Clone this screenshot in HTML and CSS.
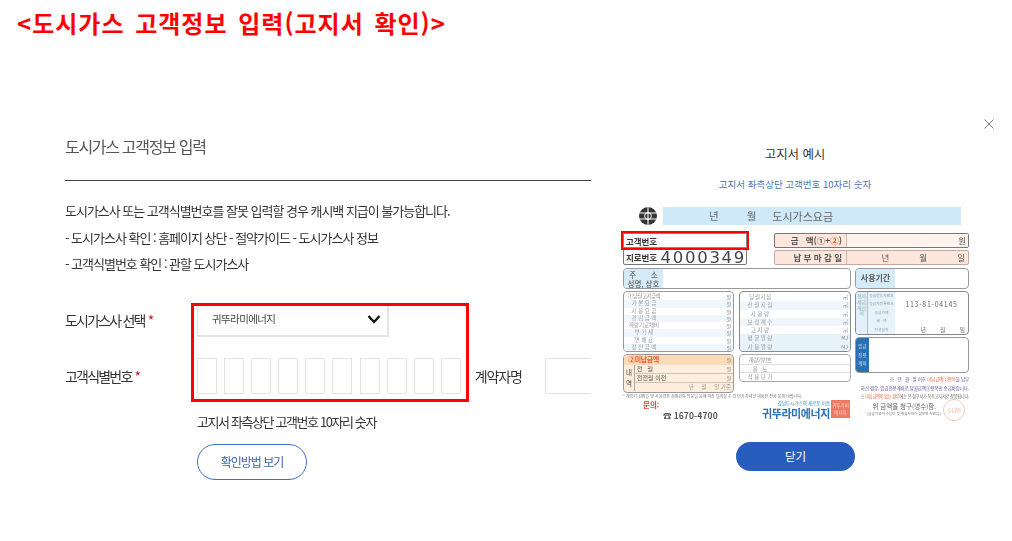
FILE: index.html
```html
<!DOCTYPE html>
<html lang="ko">
<head>
  <meta charset="UTF-8" />
  <title>도시가스 고객정보 입력</title>
  <link rel="stylesheet" href="styles.css">
</head>
<body>
  <h1 class="page-title">&lt;도시가스 고객정보 입력(고지서 확인)&gt;</h1>

  <div class="content">
    <!-- form -->
    <div class="form-panel">
      <h2 class="form-title">도시가스 고객정보 입력</h2>
      <div class="notice">
        <p>도시가스사 또는 고객식별번호를 잘못 입력할 경우 캐시백 지급이 불가능합니다.</p>
        <p>- 도시가스사 확인 : 홈페이지 상단 - 절약가이드 - 도시가스사 정보</p>
        <p>- 고객식별번호 확인 : 관할 도시가스사</p>
      </div>

      <div class="fields">
        <div class="mark-box"></div>
        <div class="field-row select-row">
          <span class="field-label">도시가스사 선택<em>*</em></span>
          <div class="select-box">
            <span>귀뚜라미에너지</span>
            <svg width="14" height="10" viewBox="0 0 14 10"><path d="M1.5 2 L7 8 L12.5 2" fill="none" stroke="#111" stroke-width="2.4"/></svg>
          </div>
        </div>
        <div class="field-row number-row">
          <span class="field-label">고객식별번호<em>*</em></span>
          <div class="digits">
            <i></i><i></i><i></i><i></i><i></i><i></i><i></i><i></i><i></i><i></i>
          </div>
          <span class="contract-label">계약자명</span>
          <i class="contract-input"></i>
        </div>
        <p class="hint">고지서 좌측상단 고객번호 10자리 숫자</p>
        <div class="how-button">확인방법 보기</div>
      </div>
    </div>

    <!-- bill example -->
    <div class="modal">
      <svg class="close" width="10" height="10" viewBox="0 0 10 10"><path d="M0.5 0.5 L9.5 9.5 M9.5 0.5 L0.5 9.5" stroke="#777" stroke-width="1"/></svg>
      <div class="modal-title">고지서 예시</div>
      <div class="modal-sub">고지서 좌측상단 고객번호 10자리 숫자</div>

      <div class="bill">
        <div class="bill-head">
          <svg class="bill-logo" width="20" height="20" viewBox="0 0 20 20">
            <circle cx="10" cy="10" r="9" fill="#333"/>
            <path d="M1 7 H19 M1 13 H19 M10 1 V19" stroke="#fff" stroke-width="1.1"/>
            <circle cx="10" cy="10" r="3.4" fill="none" stroke="#fff" stroke-width="1"/>
          </svg>
          <div class="bill-title"><span>년</span><span>월</span><span>도시가스요금</span></div>
        </div>

        <div class="bill-summary">
          <div class="giro">
            <div class="giro-row customer-no"><b>고객번호</b></div>
            <div class="giro-row"><b>지로번호</b><span class="giro-no">4000349</span></div>
          </div>
          <div class="amount">
            <div class="amount-row total"><b>금 &nbsp; 액(①+<u>②</u>)</b><span>원</span></div>
            <div class="amount-row"><b>납 부 마 감 일</b><span class="date"><s>년</s><s>월</s><s>일</s></span></div>
          </div>
        </div>

        <div class="bill-columns">
          <div class="bill-left">
            <div class="address">
              <div class="address-label"><span>주 &nbsp; &nbsp; &nbsp; 소</span><span>성명, 상호</span></div>
            </div>
            <div class="tables">
              <div class="table-col">
                <div class="sheet">
                  <p><span>①당월고지금액</span><small>원</small></p>
                  <p><span>기 본 요 금</span><small>원</small></p>
                  <p><span>사 용 요 금</span><small>원</small></p>
                  <p><span>경 감 금 액</span><small>원</small></p>
                  <p><span>계량기교체비</span><small>원</small></p>
                  <p><span>부 가 세</span><small>원</small></p>
                  <p><span>연 체 료</span><small>원</small></p>
                  <p><span>정 산 금 액</span><small>원</small></p>
                </div>
                <div class="unpaid">
                  <div class="unpaid-head"><span>②미납금액</span><small>원</small></div>
                  <div class="unpaid-body">
                    <div class="unpaid-side">내<br>역</div>
                    <div class="unpaid-rows">
                      <p><span>전 &nbsp; 월</span><small>원</small></p>
                      <p><span>전전월 이전</span><small>원</small></p>
                      <p class="unpaid-date">년 &nbsp; &nbsp; 월 &nbsp; &nbsp; 일 기준</p>
                    </div>
                  </div>
                </div>
              </div>
              <div class="table-col">
                <div class="sheet meter">
                  <p><span>당 월 지 침</span><small>㎥</small></p>
                  <p><span>전 월 지 침</span><small>㎥</small></p>
                  <p><span>사 용 량</span><small>㎥</small></p>
                  <p><span>보 정 계 수</span><small>㎥</small></p>
                  <p><span>고 지 량</span><small>㎥</small></p>
                  <p class="tint"><span>평 균 열 량</span><small>MJ</small></p>
                  <p class="tint"><span>사 용 열 량</span><small>MJ</small></p>
                </div>
                <div class="sheet meter small-sheet">
                  <p><span>계량기번호</span></p>
                  <p><span>용 &nbsp; 도</span></p>
                  <p><span>적 용 단 가</span></p>
                </div>
              </div>
            </div>
            <div class="fine">* 계량기 검침일 및 사용량은 검침원의 방문일 등에 따라 달라질 수 있으며 자세한 내용은 전화 문의 바랍니다.</div>
            <div class="contact">
              <div class="contact-phone">
                <span class="ask">문의:</span>
                <span class="phone">☎ 1670-4700</span>
              </div>
              <div class="brand">
                <div class="brand-text"><small>강남도시가스의 새로운 이름</small><b>귀뚜라미에너지</b></div>
                <div class="stamp">귀뚜라미<br>에너지</div>
              </div>
            </div>
          </div>

          <div class="bill-right">
            <div class="use-term"><span>사용기간</span></div>
            <div class="tax">
              <div class="tax-side">전자세금계산서</div>
              <div class="tax-labels">
                <span>공급받는자번호</span><span>공급자등록번호</span><span>공급가액</span><span>세 &nbsp; 액</span><span>작성일자</span>
              </div>
              <div class="tax-values">
                <span></span><span class="biz-no">113-81-04145</span><span></span><span></span><span class="tax-date"><s>년</s><s>월</s><s>일</s></span>
              </div>
            </div>
            <div class="memo"><div class="memo-side">임금<br>전용<br>계좌</div></div>
            <div class="bill-notes">
              <p class="violet">※ &nbsp; 년 &nbsp; 월 &nbsp; 일 이후 <u>미납금액②항목</u>을 납부</p>
              <p class="violet">하신 경우, 입금전용계좌로 당월금액①항목만 송금바랍니다.</p>
              <p class="overdue">※ <u>미납금액이 있는 경우</u>에는 본 청구서가 독촉고지서로 갈음됩니다.</p>
              <div class="claim">
                <div class="claim-text"><span>위 금액을 청구(영수)함.</span><small>(금융기관의 수납인 및 취급자인이 없으면 무효임.)</small></div>
                <div class="seal">수납인</div>
              </div>
            </div>
          </div>
        </div>
      </div>

      <div class="close-button">닫기</div>
    </div>
  </div>
</body>
</html>
```

FILE: styles.css
```css
* { box-sizing: border-box; }
html, body { height: 100%; }
body {
  margin: 0;
  width: 1012px;
  height: 541px;
  overflow: hidden;
  background: #fff;
  font-family: "Noto Sans CJK KR", "Noto Sans", sans-serif;
  color: #333;
}
p { margin: 0; }
i, em, s, u { font-style: normal; text-decoration: none; }
small { font-size: inherit; }

.page-title {
  margin: 0;
  height: 48px;
  padding: 8px 0 0 17px;
  font-size: 24px;
  line-height: 30px;
  font-weight: 700;
  letter-spacing: 1px;
  word-spacing: 3px;
  color: #f00;
}

.content { display: flex; height: 493px; }

/* form */
.form-panel {
  width: 591px;
  padding: 84px 0 0 65px;
  overflow: hidden;
  filter: blur(0.25px);
}
.form-title {
  margin: 0;
  height: 49px;
  font-size: 16px;
  line-height: 28px;
  font-weight: 400;
  letter-spacing: -1.3px;
  color: #555;
  border-bottom: 1px solid #444;
}
.notice { padding-top: 17px; font-size: 13px; letter-spacing: -1.02px; color: #333; }
.notice p { height: 26.5px; line-height: 26px; }

.fields { position: relative; padding-top: 25px; }
.mark-box {
  position: absolute;
  left: 126px;
  top: 25px;
  width: 278px;
  height: 99px;
  border: 3px solid #f00;
  pointer-events: none;
}
.field-row { display: flex; align-items: center; }
.field-label {
  flex-shrink: 0;
  width: 132px;
  font-size: 14px;
  letter-spacing: -1.8px;
  color: #333;
}
.field-label em { color: #d0112b; margin-left: 3px; }
.select-row { height: 34px; }
.select-box {
  display: flex;
  align-items: center;
  justify-content: space-between;
  width: 192px;
  height: 34px;
  padding: 0 6px 0 14px;
  border: solid #e4e4e4;
  border-width: 0 2px 2px 1px;
  font-size: 10.5px;
  letter-spacing: -0.6px;
  color: #444;
}
.number-row { margin-top: 21px; height: 36px; }
.digits { display: flex; gap: 7.1px; flex-shrink: 0; }
.digits i {
  width: 20px;
  height: 36px;
  border: 1.5px solid #e4e4e4;
}
.contract-label {
  margin-left: 14px;
  width: 70px;
  font-size: 14px;
  letter-spacing: -1.2px;
  flex-shrink: 0;
}
.contract-input {
  flex-shrink: 0;
  width: 60px;
  height: 36px;
  border: 1.5px solid #e4e4e4;
}
.hint {
  margin: 18px 0 0 132px;
  font-size: 13px;
  line-height: 20px;
  letter-spacing: -1.4px;
  color: #333;
}
.how-button {
  margin: 12px 0 0 132px;
  width: 110px;
  height: 36px;
  border: 1.5px solid #3d6fc4;
  border-radius: 18px;
  text-align: center;
  font-size: 12px;
  line-height: 33px;
  letter-spacing: -1px;
  color: #3a64ad;
}

/* modal */
.modal {
  position: relative;
  width: 421px;
  padding: 92px 0 0 29px;
}
.close { position: absolute; left: 393px; top: 71px; }
.modal-title {
  width: 350px;
  text-align: center;
  font-size: 12.5px;
  line-height: 28px;
  height: 28px;
  letter-spacing: -0.1px;
  color: #333;
}
.modal-sub {
  width: 350px;
  margin-top: 8px;
  height: 29px;
  text-align: center;
  font-size: 9.5px;
  line-height: 16px;
  color: #4d72b5;
}
.close-button {
  margin: 17px 0 0 116px;
  width: 119px;
  height: 29px;
  border-radius: 15px;
  background: #275dbd;
  color: #fff;
  text-align: center;
  font-size: 11.5px;
  line-height: 28px;
}

/* bill picture */
.bill {
  width: 350px;
  height: 220px;
  padding: 2px 1px 0 3px;
  overflow: hidden;
  font-size: 7px;
  color: #666;
  filter: blur(0.45px);
}
.bill b { font-weight: 700; }
.bill-head { display: flex; align-items: center; height: 18px; padding-left: 15px; gap: 5px; }
.bill-title {
  display: flex;
  width: 298px;
  height: 18px;
  padding-left: 46px;
  background: #cfe9f8;
  font-size: 10.5px;
  line-height: 18px;
  color: #666;
}
.bill-title span:nth-child(2) { margin-left: 28px; }
.bill-title span:nth-child(3) { margin-left: 16px; font-size: 11px; }

.bill-summary { display: flex; justify-content: space-between; margin-top: 8px; height: 33px; }
.giro { width: 124px; }
.giro-row {
  display: flex;
  align-items: center;
  height: 16px;
  border: 1.5px solid #777;
  border-radius: 2px;
}
.giro-row b { width: 40px; padding-left: 2px; font-size: 8.5px; color: #333; letter-spacing: -0.1px; }
.customer-no { height: 15px; margin-bottom: 1px; outline: 2px solid #f00; border-color: #888; border-radius: 0; }
.giro-no {
  font-family: "DejaVu Sans", sans-serif;
  font-size: 16.5px;
  line-height: 15px;
  letter-spacing: 1.7px;
  color: #444;
}
.amount { width: 195px; }
.amount-row {
  display: flex;
  height: 15px;
  margin-bottom: 2px;
  border: 1px solid #c9a79c;
  border-radius: 2px;
  background: #fde6dc;
  color: #555;
  font-size: 8.5px;
  line-height: 13px;
}
.amount-row b { width: 72px; text-align: right; padding-right: 4px; border-right: 1px solid #d9b5a7; flex-shrink: 0; }
.amount-row.total { border: 1.5px solid #777; }
.amount-row.total span { flex: 1; text-align: right; padding-right: 2px; background: #fff3ee; }
.amount-row u { color: #f2552c; }
.date { flex: 1; display: flex; justify-content: flex-end; gap: 30px; padding-right: 3px; }

.bill-columns { display: flex; justify-content: space-between; margin-top: 2px; }
.bill-left { width: 228px; }
.bill-right { width: 114px; }

.address {
  height: 21px;
  border: 1px solid #999;
  border-radius: 4px;
  overflow: hidden;
}
.address-label {
  display: flex;
  flex-direction: column;
  justify-content: center;
  width: 39px;
  height: 100%;
  background: #d5ebf8;
  font-size: 7.5px;
  line-height: 9px;
  text-align: center;
  color: #444;
}
.tables { display: flex; justify-content: space-between; margin-top: 2px; }
.table-col { width: 112px; }
.table-col:first-child { width: 111px; }
.sheet {
  height: 61px;
  padding: 1px 0;
  border: 1px solid #888;
  border-radius: 4px;
  overflow: hidden;
}
.sheet p {
  display: flex;
  justify-content: space-between;
  height: 7.3px;
  line-height: 7.3px;
  font-size: 5.5px;
  padding-right: 2px;
  color: #999;
}
.meter p { height: 8.3px; line-height: 8.3px; }
.sheet p:nth-child(even) { background: #eff7fc; }
.sheet p span { width: 40px; text-align: center; white-space: nowrap; }
.sheet p:first-child span { letter-spacing: -0.5px; }
.sheet p small { color: #888; font-size: 5px; }
.meter p.tint { background: #e6f3fb; }
.small-sheet { height: 28px; margin-top: 2px; padding: 1px 0; border-color: #aaa; }
.small-sheet p { background: none !important; height: 8.5px; border-bottom: 1px solid #ddd; }
.table-col:first-child .sheet { border-color: #999; }
.unpaid {
  height: 39px;
  margin-top: 2px;
  border: 1.5px solid #999;
  border-radius: 4px;
  background: #fdeedd;
  overflow: hidden;
}
.unpaid-head {
  display: flex;
  justify-content: space-between;
  height: 10px;
  padding-right: 2px;
  background: #fbdcb9;
  font-size: 7px;
  line-height: 9px;
  color: #f0552c;
  font-weight: 700;
}
.unpaid-head span { width: 39px; text-align: center; white-space: nowrap; letter-spacing: -0.5px; }
.unpaid-head small { color: #888; font-size: 5px; font-weight: 400; }
.unpaid-body { display: flex; height: 26px; }
.unpaid-side { width: 11px; padding-top: 2px; font-size: 6.5px; line-height: 11px; text-align: center; border-right: 1px solid #aaa; color: #444; }
.unpaid-rows { flex: 1; }
.unpaid-rows p {
  display: flex;
  justify-content: space-between;
  height: 9px;
  padding: 0 2px;
  font-size: 6px;
  line-height: 8px;
  border-bottom: 1px solid #d5c4b2;
  color: #555;
  white-space: nowrap;
}
.unpaid-rows p small { color: #888; font-size: 5px; }
.unpaid-rows .unpaid-date { display: block; height: 8px; text-align: right; border: 0; color: #999; font-size: 5.5px; }

.fine {
  margin-top: 1px;
  height: 5px;
  font-size: 4px;
  line-height: 5px;
  color: #777;
  white-space: nowrap;
}
.contact { display: flex; justify-content: space-between; padding-top: 1px; }
.contact-phone { display: flex; flex-direction: column; padding-left: 20px; }
.ask { font-size: 7.5px; line-height: 9px; font-weight: 700; color: #e8402e; }
.phone { margin: 1px 0 0 20px; font-size: 8.5px; line-height: 10px; font-weight: 700; letter-spacing: 0.1px; color: #555; }
.brand { display: flex; gap: 1px; margin-right: 1px; }
.brand-text { display: flex; flex-direction: column; align-items: flex-end; }
.brand-text small { font-size: 4.5px; line-height: 6px; color: #2f8fd0; }
.brand-text b { font-size: 11px; line-height: 14px; color: #2b71b5; letter-spacing: -0.4px; white-space: nowrap; }
.stamp {
  width: 19px;
  height: 18px;
  background: #ef7a63;
  color: #fbd5cc;
  font-size: 4.5px;
  line-height: 7px;
  text-align: center;
  padding-top: 2px;
  white-space: nowrap;
}

.use-term {
  height: 21px;
  border: 1px solid #999;
  border-radius: 4px;
  overflow: hidden;
}
.use-term span {
  display: block;
  width: 39px;
  height: 100%;
  background: #d5ebf8;
  text-align: center;
  font-size: 8px;
  line-height: 18px;
  font-weight: 700;
  color: #555;
}
.tax {
  display: flex;
  height: 44px;
  margin-top: 2px;
  border: 1px solid #888;
  border-radius: 4px;
  overflow: hidden;
  font-size: 5.5px;
}
.tax-side {
  width: 12px;
  padding-top: 1px;
  background: #e1f0fa;
  border-right: 1px solid #bbb;
  font-size: 5px;
  line-height: 5.8px;
  text-align: center;
  color: #8aa;
}
.tax-labels, .tax-values { display: flex; flex-direction: column; }
.tax-labels { width: 27px; background: #e6f3fb; }
.tax-values { flex: 1; }
.tax-labels span, .tax-values span { height: 8.4px; line-height: 8.4px; white-space: nowrap; }
.tax-labels span { color: #8a9aa5; text-align: center; font-size: 3.8px; }
.biz-no { text-align: center; font-size: 7px; letter-spacing: 0.7px; color: #666; }
.tax-date { display: flex; justify-content: flex-end; gap: 14px; padding-right: 3px; font-size: 6px; color: #777; }

.memo {
  height: 36px;
  margin-top: 2px;
  border: 1px solid #999;
  border-radius: 4px;
  overflow: hidden;
}
.memo-side {
  width: 13px;
  height: 100%;
  padding-top: 4px;
  background: #2a70b4;
  color: #cfe4f5;
  font-size: 4.5px;
  line-height: 8.5px;
  text-align: center;
}
.bill-notes { margin: 2px 0 0; font-size: 4.5px; line-height: 8.5px; }
.bill-notes p { white-space: nowrap; color: #666; letter-spacing: -0.1px; text-align: right; }
.bill-notes p.violet { color: #5b4a9c; }
.bill-notes p.overdue { font-size: 4.2px; letter-spacing: -0.25px; }
.bill-notes u { color: #f0643c; }
.claim { display: flex; justify-content: space-between; margin-top: 1px; padding-right: 4px; }
.claim-text { display: flex; flex-direction: column; align-items: center; padding-left: 12px; white-space: nowrap; }
.claim-text span { font-size: 6.5px; line-height: 9px; color: #666; }
.claim-text small { font-size: 3.6px; line-height: 5px; color: #777; }
.seal {
  width: 22px;
  height: 22px;
  margin-top: -3px;
  border: 1px solid #f6cdb8;
  border-radius: 50%;
  color: #f2b596;
  font-size: 5px;
  line-height: 20px;
  text-align: center;
  flex-shrink: 0;
}
```
